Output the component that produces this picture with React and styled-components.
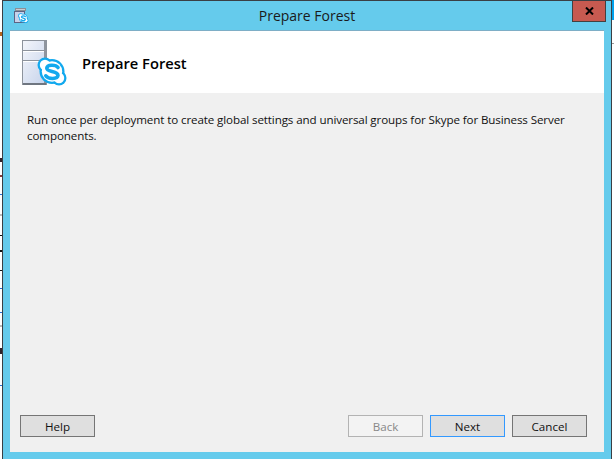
import React from 'react';
import styled, { createGlobalStyle } from 'styled-components';

const UI_FONT = '"Open Sans", "Noto Sans", "Liberation Sans", sans-serif';

function SkypeBadge({ x, y, size }) {
  return (
    <g transform={`translate(${x} ${y}) scale(${size / 30})`}>
      <circle cx="15" cy="14.5" r="12.5" fill="#12a9ee" />
      <circle cx="8" cy="8" r="7.5" fill="#12a9ee" />
      <circle cx="22" cy="21" r="7.5" fill="#12a9ee" />
      <circle cx="15" cy="14.5" r="10.2" fill="#fff" />
      <circle cx="8" cy="8" r="5.2" fill="#fff" />
      <circle cx="22" cy="21" r="5.2" fill="#fff" />
      <path d="M21 10.5C19 7.6 10 7.2 9.8 11.2C9.8 15.4 21 13.4 21 18.4C20.6 22.4 11.2 22.4 8.8 18.8" fill="none" stroke="#12a9ee" strokeWidth="3.6" strokeLinecap="round" />
    </g>
  );
}

function ServerIcon() {
  return (
    <svg width="46" height="47" viewBox="0 0 46 47">
      <defs>
        <linearGradient id="tower" x1="0" y1="0" x2="1" y2="1">
          <stop offset="0" stopColor="#f4f6fb" />
          <stop offset="1" stopColor="#c5d2ea" />
        </linearGradient>
      </defs>
      <rect x="0.5" y="0.5" width="24" height="44" fill="url(#tower)" stroke="#8d939c" />
      <rect x="22" y="1" width="2" height="43" fill="#8f959e" />
      <path d="M1 10.5H23M1 20.5H23" stroke="#8d939c" />
      <path d="M1 11.5H22M1 21.5H22" stroke="#fff" />
      <rect x="1" y="43" width="23" height="2" fill="#6f7680" />
      <SkypeBadge x={15} y={17} size={30} />
    </svg>
  );
}

function WindowIcon() {
  return (
    <svg width="15" height="16" viewBox="0 0 15 16">
      <rect x="1.5" y="0.5" width="10" height="2" fill="#c9ccd2" stroke="#8b8f96" />
      <rect x="0.5" y="3.5" width="10" height="11" fill="#c8d2ea" stroke="#5d6484" />
      <SkypeBadge x={4} y={5} size={10.5} />
    </svg>
  );
}

export default function App() {
  return (
    <>
      <GlobalStyle />
      <Screen>
        <DesktopEdge />
        <Window>
          <TitleBar>
            <TitleIcon><WindowIcon /></TitleIcon>
            <WindowTitle>Prepare Forest</WindowTitle>
            <CloseButton aria-label="Close">
              <svg width="9" height="8" viewBox="0 0 9 8">
                <path d="M1 .5L8 7.5M8 .5L1 7.5" stroke="#000" strokeWidth="2" />
              </svg>
            </CloseButton>
          </TitleBar>
          <Client>
            <Banner>
              <ServerIcon />
              <Heading>Prepare Forest</Heading>
            </Banner>
            <Body>
              Run once per deployment to create global settings and universal groups for Skype for Business Server components.
            </Body>
            <Footer>
              <Button>Help</Button>
              <NavButtons>
                <Button disabled>Back</Button>
                <Button $focused>Next</Button>
                <Button>Cancel</Button>
              </NavButtons>
            </Footer>
          </Client>
        </Window>
        <DesktopEdge $right />
      </Screen>
    </>
  );
}

const GlobalStyle = createGlobalStyle`
  * { margin: 0; padding: 0; box-sizing: border-box; }
  html, body { width: 100%; height: 100%; overflow: hidden; background: #fff; }
  body { font-family: ${UI_FONT}; color: #000; }
`;

const Screen = styled.div`
  width: 614px;
  height: 459px;
  display: flex;
`;

const DesktopEdge = styled.div`
  width: 2px;
  flex: none;
  background: ${(p) => p.$right
    ? 'linear-gradient(#00a2ed 0 20px, #fff 20px 43px, #999 43px 44px, #fff 44px)'
    : `linear-gradient(#fff 0 32px, #b5651d 32px 36px, #fff 36px 158px, #30222a 158px 162px,
       #fff 162px 175px, #8a3a3a 175px 177px, #fff 177px 194px, #2a6fd0 194px 195px,
       #fff 195px 214px, #bbb 214px 216px, #fff 216px 235px, #111 235px 236px, #fff 236px 250px,
       #111 250px 252px, #fff 252px 270px, #111 270px 271px, #fff 271px 288px, #2a6fd0 288px 289px,
       #fff 289px 312px, #2a6fd0 312px 313px, #fff 313px 325px, #bbb 325px 327px, #fff 327px 348px,
       #30222a 348px 354px, #fff 354px 385px, #2a6fd0 385px 386px, #fff 386px)`};
`;

const Window = styled.div`
  width: 610px;
  flex: none;
  display: flex;
  flex-direction: column;
  background: #65cbec;
  border: 1px solid #3a3f44;
  border-bottom: none;
  padding: 0 7px 7px;
`;

const TitleBar = styled.div`
  height: 29px;
  flex: none;
  position: relative;
  display: flex;
  justify-content: center;
`;

const TitleIcon = styled.div`
  position: absolute;
  left: 4px;
  top: 7px;
  line-height: 0;
`;

const WindowTitle = styled.div`
  font-size: 14px;
  line-height: 30px;
  color: #1a1a1a;
`;

const CloseButton = styled.button`
  position: absolute;
  right: -2px;
  top: 0;
  width: 34px;
  height: 21px;
  display: flex;
  align-items: center;
  justify-content: center;
  background: #c75a50;
  border: 1px solid #44403f;
  border-top: none;
`;

const Client = styled.div`
  flex: 1;
  display: flex;
  flex-direction: column;
  background: #f0f0f0;
  border-top: 1px solid #7eaec6;
`;

const Banner = styled.div`
  height: 62px;
  flex: none;
  display: flex;
  align-items: flex-start;
  gap: 14px;
  padding: 9px 0 0 12px;
  background: #fff;
`;

const Heading = styled.h1`
  margin-top: 13px;
  font-size: 14.7px;
  font-weight: 600;
  line-height: 20px;
`;

const Body = styled.p`
  flex: 1;
  padding: 19px 17px 0;
  font-size: 11.6px;
  letter-spacing: -0.11px;
  line-height: 16px;
  color: #111;
`;

const Footer = styled.div`
  display: flex;
  justify-content: space-between;
  padding: 0 17px 15px 10px;
`;

const NavButtons = styled.div`
  display: flex;
  gap: 7px;
`;

const Button = styled.button`
  width: 75px;
  height: 22px;
  padding-top: 1px;
  font-family: ${UI_FONT};
  font-size: 11.6px;
  line-height: 18px;
  color: ${(p) => (p.disabled ? '#888' : '#111')};
  background: ${(p) => (p.disabled ? '#f3f3f3' : '#dfdfdf')};
  border: 1px solid ${(p) => (p.disabled ? '#b3b3b3' : p.$focused ? '#3399ff' : '#757575')};
`;
